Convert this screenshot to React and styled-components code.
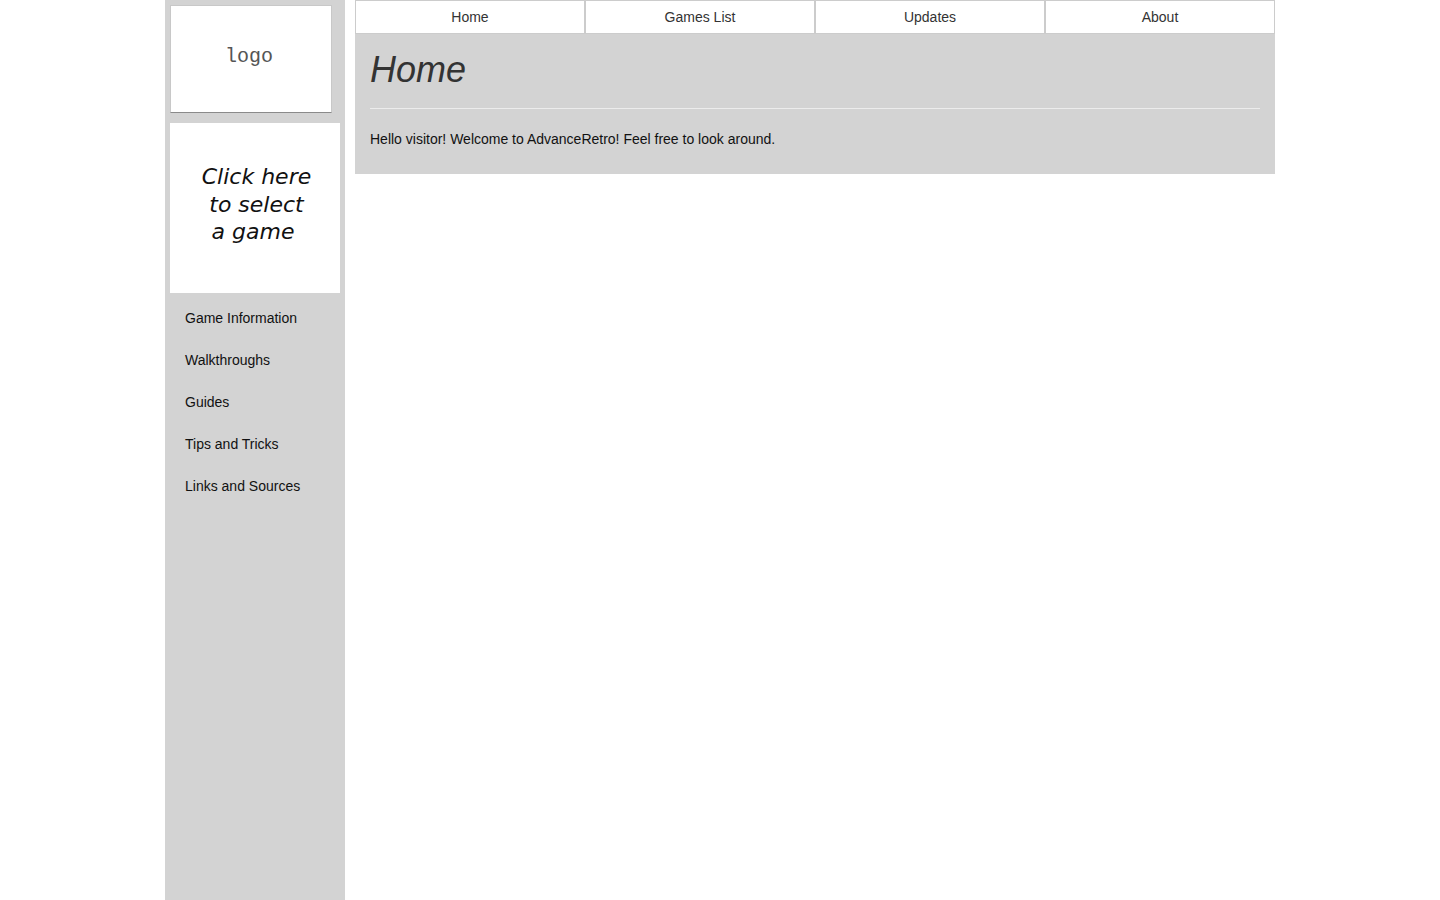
import React from 'react';
import styled, { createGlobalStyle } from 'styled-components';

const GlobalStyle = createGlobalStyle`
  html, body {
    margin: 0;
    padding: 0;
    background: #fff;
    font-family: "Liberation Sans", Arial, sans-serif;
    font-size: 14px;
    color: #111;
  }
`;

const Page = styled.div`
  width: 1110px;
  margin: 0 auto;
  display: flex;
  gap: 10px;
  align-items: flex-start;
`;

const Sidebar = styled.aside`
  width: 180px;
  min-height: 100vh;
  background: #d3d3d3;
  padding: 5px;
  box-sizing: border-box;
  display: flex;
  flex-direction: column;
`;

const Logo = styled.div`
  width: 162px;
  height: 108px;
  box-sizing: border-box;
  background: #fff;
  border: 1px solid #c8c8c8;
  border-bottom-color: #8a8a8a;
  display: flex;
  align-items: center;
  justify-content: center;
  font-family: "Liberation Mono", "Courier New", monospace;
  font-size: 20px;
  color: #555;
  padding: 0 4px 5px 0;
`;

const GamePicker = styled.div`
  margin-top: 10px;
  width: 170px;
  height: 170px;
  box-sizing: border-box;
  background: #fff;
  padding: 40px 0 0 3px;
  text-align: center;
  font-family: "DejaVu Sans", sans-serif;
  font-style: italic;
  font-size: 22px;
  line-height: 27.5px;
  color: #111;
  cursor: pointer;
`;

const NavList = styled.ul`
  list-style: none;
  margin: 4px 0 0;
  padding: 0 0 0 15px;
`;

const NavItem = styled.li`
  height: 42px;
  line-height: 42px;
  font-size: 14px;
  color: #111;
`;

const Main = styled.main`
  width: 920px;
`;

const Tabs = styled.nav`
  display: grid;
  grid-template-columns: repeat(4, 1fr);
`;

const Tab = styled.div`
  height: 34px;
  box-sizing: border-box;
  border: 1px solid #ccc;
  background: #fff;
  display: flex;
  align-items: center;
  justify-content: center;
  font-size: 14px;
  color: #333;
`;

const Panel = styled.section`
  background: #d3d3d3;
  padding: 16px 15px 15px;
`;

const Title = styled.h1`
  margin: 0;
  font-size: 36px;
  line-height: 40px;
  font-weight: normal;
  font-style: italic;
  color: #333;
`;

const Rule = styled.hr`
  margin: 18px 0 20px;
  border: 0;
  border-top: 1px solid #ececec;
`;

const Text = styled.p`
  margin: 0 0 10px;
  line-height: 20px;
  color: #111;
`;

const tabs = ['Home', 'Games List', 'Updates', 'About'];
const links = ['Game Information', 'Walkthroughs', 'Guides', 'Tips and Tricks', 'Links and Sources'];

export default function App() {
  return (
    <>
      <GlobalStyle />
      <Page>
        <Sidebar>
          <Logo>logo</Logo>
          <GamePicker>
            Click here<br />
            to select<br />
            a game&nbsp;
          </GamePicker>
          <NavList>
            {links.map(l => (
              <NavItem key={l}>{l}</NavItem>
            ))}
          </NavList>
        </Sidebar>
        <Main>
          <Tabs>
            {tabs.map(t => (
              <Tab key={t}>{t}</Tab>
            ))}
          </Tabs>
          <Panel>
            <Title>Home</Title>
            <Rule />
            <Text>Hello visitor! Welcome to AdvanceRetro! Feel free to look around.</Text>
          </Panel>
        </Main>
      </Page>
    </>
  );
}
